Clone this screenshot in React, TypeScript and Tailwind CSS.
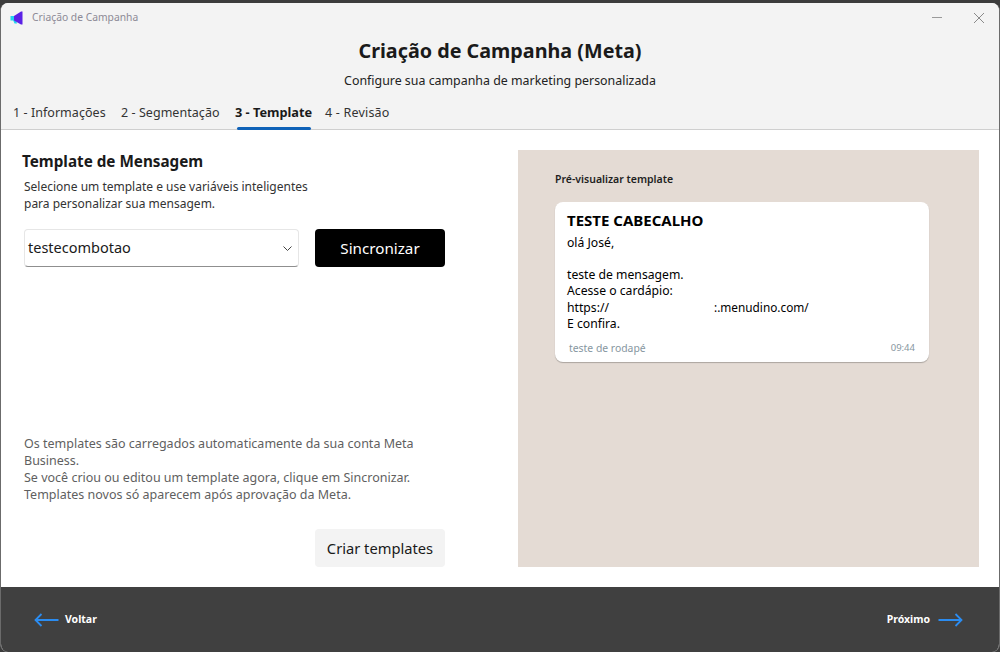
const font = { fontFamily: '"Noto Sans", sans-serif' };

function Logo() {
  return (
    <svg width="14" height="14" viewBox="0 0 14 14" className="ml-[9px]">
      <path d="M0.5 5 H4 V9.5 H0.5 Z" fill="#22d3ee" />
      <path d="M3 9 H6 L7 12.5 H4.5 Z" fill="#22d3ee" />
      <path d="M4 5 L11 0.5 H12.5 V13.5 H11 L4 9.5 Z" fill="#5b21e6" />
    </svg>
  );
}

function Tab({ children, active, className }: { children: React.ReactNode; active?: boolean; className: string }) {
  return (
    <div className={`relative flex h-[30px] items-start leading-[18px] ${active ? "pt-[4px] text-[12.75px] font-bold text-[#1a1a1a]" : "pt-[5px] text-[12.5px] tracking-[0.05px] text-[#333333]"} ${className}`}>
      {children}
      {active && <div className="absolute bottom-[-1px] left-[2px] h-[3px] w-[74px] rounded-sm bg-[#0f62b8]" />}
    </div>
  );
}

export default function App() {
  return (
    <div className="h-[652px] w-[1000px] overflow-hidden bg-[#3c3c3c] pt-[3px]" style={font}>
      <div className="flex h-[649px] flex-col overflow-hidden rounded-t-[8px] rounded-b-[8px] border-x border-[#6b6b6b] bg-white">
        <header className="h-[127px] shrink-0 border-b border-[#cfcfcf] bg-[#f3f3f3]">
          <div className="flex h-[29px] items-center">
            <Logo />
            <span className="ml-[8px] text-[10.3px] text-[#8d8a96]">Criação de Campanha</span>
            <div className="ml-auto flex items-center">
              <div className="h-px w-[10px] bg-[#9a9a9a]" />
              <svg width="12" height="12" viewBox="0 0 12 12" className="ml-[31px] mr-[14px]">
                <path d="M1 1 L11 11 M11 1 L1 11" stroke="#8a8a8a" strokeWidth="1" fill="none" />
              </svg>
            </div>
          </div>
          <h1 className="mt-[5px] text-center text-[19.75px] font-bold leading-[28px] text-[#1a1a1a]">Criação de Campanha (Meta)</h1>
          <p className="mt-[7px] text-center text-[12.4px] leading-[18px] text-[#222222]">Configure sua campanha de marketing personalizada</p>
          <nav className="mt-[9px] flex pl-[12px]">
            <Tab className="w-[108px]">1 - Informações</Tab>
            <Tab className="w-[114px]">2 - Segmentação</Tab>
            <Tab active className="w-[90px]">3 - Template</Tab>
            <Tab className="w-[80px]"><span className="tracking-[0.2px]">4 - Revisão</span></Tab>
          </nav>
        </header>

        <main className="flex h-[457px] shrink-0 bg-white">
          <section className="flex w-[517px] shrink-0 flex-col pl-[21px] pt-[20px]">
            <h2 className="text-[15.25px] font-bold leading-[22px] text-[#1a1a1a]">Template de Mensagem</h2>
            <p className="ml-[2px] mt-[6px] text-[12px] leading-[17px] text-[#333333]">
              Selecione um template e use variáveis inteligentes<br />para personalizar sua mensagem.
            </p>
            <div className="ml-[2px] mt-[17px] flex gap-[16px]">
              <div className="flex h-[38px] w-[275px] items-center justify-between rounded-[4px] border border-[#e6e6e6] border-b-[#8f8f8f] bg-white pl-[3px] pr-[6px] text-[14.5px] text-[#1a1a1a]">
                testecombotao
                <svg width="9" height="5" viewBox="0 0 9 5">
                  <path d="M0.5 0.5 L4.5 4.5 L8.5 0.5" stroke="#444444" strokeWidth="1" fill="none" />
                </svg>
              </div>
              <button className="h-[38px] w-[130px] rounded-[4px] bg-black text-[15.2px] text-white">Sincronizar</button>
            </div>
            <p className="ml-[2px] mt-[168px] w-[400px] text-[12.5px] leading-[17px] text-[#5f5f5f]">
              Os templates são carregados automaticamente da sua conta Meta Business.<br />
              Se você criou ou editou um template agora, clique em Sincronizar.<br />
              Templates novos só aparecem após aprovação da Meta.
            </p>
            <div className="ml-[2px] mt-[26px] flex w-[421px] justify-end">
              <button className="h-[38px] w-[130px] rounded-[4px] bg-[#f3f3f3] text-[14.7px] text-[#1a1a1a]">Criar templates</button>
            </div>
          </section>

          <section className="mb-[20px] mt-[20px] w-[461px] shrink-0 bg-[#e4dbd4] pl-[37px] pt-[21px]">
            <div className="text-[10.5px] font-semibold leading-[16px] text-[#1f1f1f]">Pré-visualizar template</div>
            <div className="mt-[15px] h-[160px] w-[374px] rounded-[8px] bg-white pl-[12px] pr-[14px] pt-[9px] shadow-[0_1px_1px_rgba(0,0,0,0.25)]">
              <div className="text-[15px] font-bold leading-[18px] text-black">TESTE CABECALHO</div>
              <div className="mt-[6px] text-[12.2px] leading-[16px] text-black">
                olá José,<br /><br />teste de mensagem.<br />Acesse o cardápio:<br />
                https://<span className="ml-[105px] text-[11.8px]">:.menudino.com/</span><br />E confira.
              </div>
              <div className="mt-[9px] flex items-center justify-between pl-[2px]">
                <span className="text-[10.4px] leading-[14px] text-[#8696a0]">teste de rodapé</span>
                <span className="text-[9.5px] leading-[14px] text-[#8696a0]">09:44</span>
              </div>
            </div>
          </section>
        </main>

        <footer className="flex flex-1 items-center justify-between bg-[#404040] pl-[33px] pr-[36px] text-[10.5px] font-bold text-white">
          <div className="flex items-center gap-[6px]">
            <svg width="25" height="14" viewBox="0 0 25 14">
              <path d="M24.5 7 H1.5 M7.5 1 L1.5 7 L7.5 13" stroke="#2b8cf0" strokeWidth="1.8" fill="none" />
            </svg>
            Voltar
          </div>
          <div className="flex items-center gap-[8px]">
            Próximo
            <svg width="25" height="14" viewBox="0 0 25 14">
              <path d="M0.5 7 H23.5 M17.5 1 L23.5 7 L17.5 13" stroke="#2b8cf0" strokeWidth="1.8" fill="none" />
            </svg>
          </div>
        </footer>
      </div>
    </div>
  );
}
